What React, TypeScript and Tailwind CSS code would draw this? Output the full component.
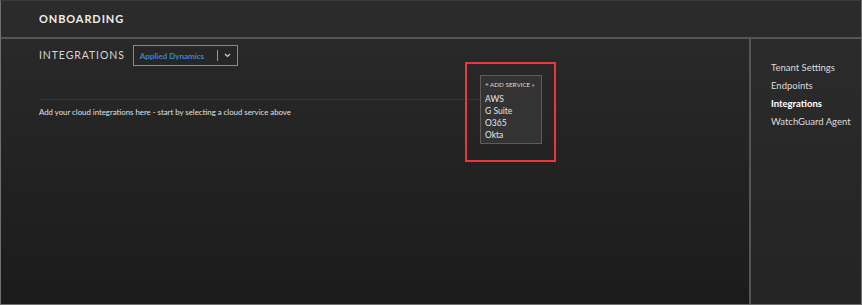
import React from "react";

const services = ["AWS", "G Suite", "O365", "Okta"];
const navItems = [
  { label: "Tenant Settings", active: false },
  { label: "Endpoints", active: false },
  { label: "Integrations", active: true },
  { label: "WatchGuard Agent", active: false },
];

const App = () => {
  return (
    <div
      className="w-[862px] h-[305px] flex flex-col border-x border-b border-t border-x-[#707070] border-b-[#707070] border-t-[#3a3a3a] bg-[#262626] text-white overflow-hidden"
      style={{ fontFamily: 'Lato, "Open Sans", sans-serif' }}
    >
      {/* header */}
      <div className="h-[38px] shrink-0 flex items-center pl-[38px] bg-[#2b2b2b] border-b-2 border-[#555]">
        <span className="text-[11px] font-bold tracking-[0.9px] text-[#eeeeee]">
          ONBOARDING
        </span>
      </div>

      <div className="flex flex-1 min-h-0">
        {/* main */}
        <div className="relative flex-1 bg-gradient-to-b from-[#292929] to-[#1b1b1b] pl-[38px] pt-[6px]">
          <div className="flex items-center gap-[8px]">
            <span className="text-[10.5px] tracking-[0.9px] text-[#d6d6d6]">INTEGRATIONS</span>
            <div className="w-[105px] h-[21px] flex items-center border border-[#8a8a8a] bg-[#262626]">
              <span className="flex-1 pl-[6px] text-[8px] font-bold text-[#3d85c6]">
                Applied Dynamics
              </span>
              <div className="w-px h-[11px] bg-[#9a9a9a]" />
              <div className="w-[19px] flex justify-center">
                <svg width="7" height="5" viewBox="0 0 7 5" fill="none">
                  <path d="M1 1l2.5 2.5L6 1" stroke="#d0d0d0" strokeWidth="1.2" />
                </svg>
              </div>
            </div>
          </div>

          <div className="mt-[33px] mr-[268px] h-px bg-[#353535]" />
          <div className="mt-[7px] text-[7.8px] text-[#e0e0e0]">
            Add your cloud integrations here - start by selecting a cloud service above
          </div>

          {/* highlighted dropdown */}
          <div className="absolute left-[464px] top-[23px] w-[91px] h-[100px] border-2 border-[#e8383d]">
            <div className="absolute left-[13px] top-[11px] w-[62px] h-[69px] bg-[#333333] border border-[#5c5c5c] pl-[4px] pt-[3px] flex flex-col">
              <div className="h-[12px] shrink-0 flex items-center text-[6.3px] text-[#dddddd] whitespace-nowrap">
                + ADD SERVICE »
              </div>
              <div className="mt-[3px] flex flex-col">
                {services.map((s) => (
                  <div key={s} className="h-[11.7px] shrink-0 flex items-center text-[8.5px] text-[#e6e6e6]">
                    {s}
                  </div>
                ))}
              </div>
            </div>
          </div>
        </div>

        {/* sidebar */}
        <div className="w-[112px] shrink-0 border-l-2 border-[#555] bg-gradient-to-b from-[#2b2b2b] to-[#242424] pl-[20px] pt-[20px] flex flex-col">
          {navItems.map((n) => (
            <span
              key={n.label}
              className={
                n.active
                  ? "text-[9.5px] leading-[18px] font-bold text-white"
                  : "text-[9.5px] leading-[18px] text-[#dcdcdc]"
              }
            >
              {n.label}
            </span>
          ))}
        </div>
      </div>
    </div>
  );
};

export default App;
